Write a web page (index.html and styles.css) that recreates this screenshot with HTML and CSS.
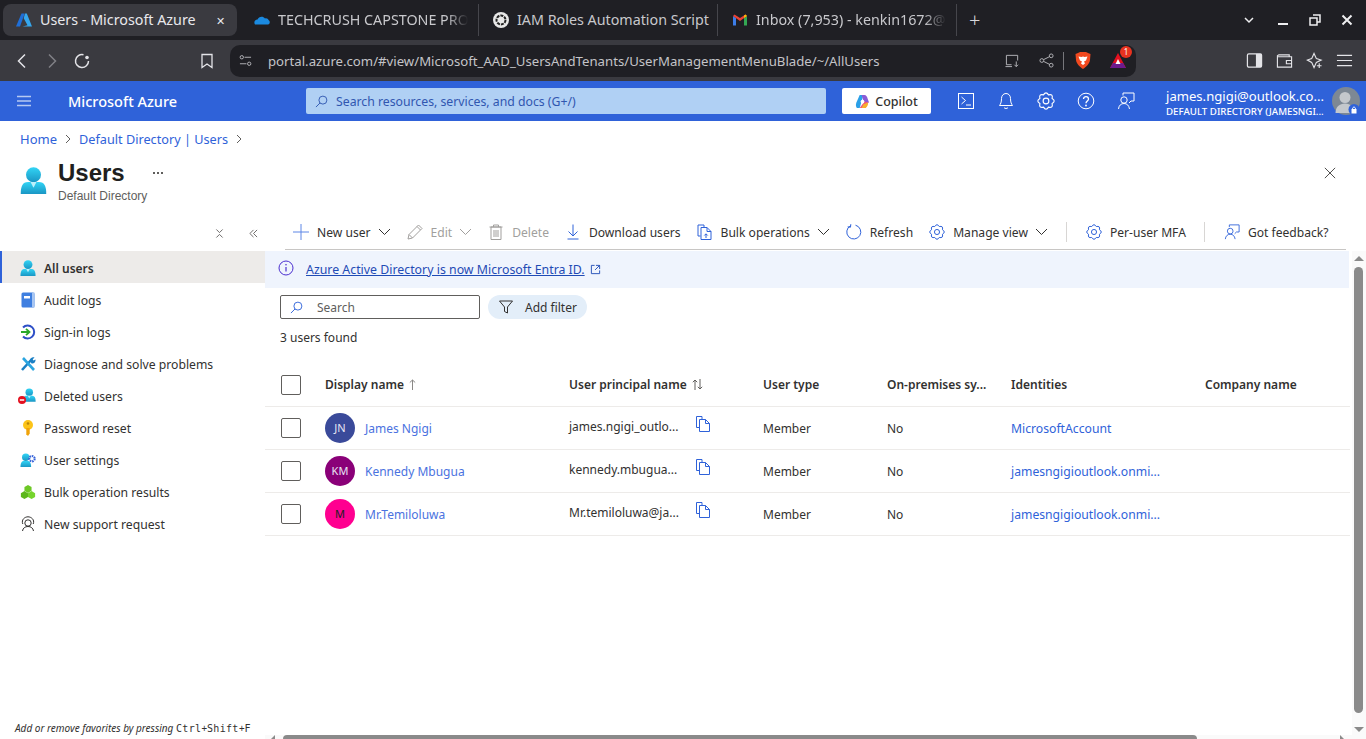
FILE: index.html
```html
<!DOCTYPE html>
<html lang="en">
<head>
  <meta charset="UTF-8" />
  <title>Users - Microsoft Azure</title>
  <link rel="stylesheet" href="styles.css">
</head>
<body>

  <!-- Shared icons -->
  <svg class="sprite">
    <defs>
      <linearGradient id="userGrad" x1="0" y1="0" x2="0" y2="1">
        <stop offset="0" stop-color="#32d4f5"/>
        <stop offset="1" stop-color="#1a96c4"/>
      </linearGradient>
      <symbol id="i-user" viewBox="0 0 18 18">
        <circle cx="9" cy="5.2" r="5" fill="url(#userGrad)"/>
        <path d="M0.5 18c0-5 1-8 5-8h7c4 0 5 3 5 8z" fill="url(#userGrad)"/>
        <path d="M7 10h4l-2 3.8z" fill="#bdf0fb"/>
      </symbol>
      <symbol id="i-gear" viewBox="0.8 0.8 14.4 14.4">
        <path d="M12.9 10.03Q13.8 13.8 10.03 12.9Q8 16.2 5.97 12.9Q2.2 13.8 3.1 10.03Q-.2 8 3.1 5.97Q2.2 2.2 5.97 3.1Q8 -.2 10.03 3.1Q13.8 2.2 12.9 5.97Q16.2 8 12.9 10.03Z" fill="none" stroke="currentColor" stroke-width=".9"/>
        <circle cx="8" cy="8" r="2.3" fill="none" stroke="currentColor" stroke-width=".9"/>
      </symbol>
      <symbol id="i-chev" viewBox="0 0 13 8">
        <path d="M1 1l5.500 5.500L12 1" fill="none" stroke="currentColor"/>
      </symbol>
      <symbol id="i-feedback" viewBox="0 0 18 18">
        <circle cx="7" cy="8" r="3.2" fill="none" stroke="currentColor"/>
        <path d="M1.500 17c.3-3.500 2.500-5.500 5.500-5.500s5 2 5.500 5.500M6 3.500V1h11v8h-3l-2 2" fill="none" stroke="currentColor"/>
      </symbol>
      <symbol id="i-copy" viewBox="0 0 14 16">
        <path d="M.5 .5h5.500v3M.5 .5v11h3M3.500 3.500h6l4 4v8h-10zM9.500 3.500v4h4" fill="none" stroke="currentColor"/>
      </symbol>
    </defs>
  </svg>

  <!-- Browser tabs -->
  <div class="tabbar">
    <div class="tab active">
      <svg class="favicon" viewBox="0 0 16 16"><path d="M5.500 1.500h3.200L4 14.500H0z" fill="#1f6fd8"/><path d="M9 1.500h1.800L16 14.500H6.500l5-1.300-3.800-7z" fill="#35a7ee"/></svg>
      <span class="tab-title">Users - Microsoft Azure</span>
      <span class="tab-close">✕</span>
    </div>
    <div class="tab">
      <svg class="favicon" viewBox="0 0 16 16"><path d="M1 12.500c-1.500-2-.3-5 2.500-5 1-3 5.500-4 7.500-1 2-.5 3 .5 3.500 1.500 2 1 1.500 4.500-.5 4.500z" fill="#1b8ae0"/></svg>
      <span class="tab-title fade">TECHCRUSH CAPSTONE PRO</span>
    </div>
    <div class="tab">
      <svg class="favicon" viewBox="0 0 16 16"><circle cx="8" cy="8" r="8" fill="#e8e8e8"/><circle cx="8" cy="8" r="4.500" fill="none" stroke="#222" stroke-width="2" stroke-dasharray="3 1"/></svg>
      <span class="tab-title">IAM Roles Automation Script</span>
    </div>
    <div class="tab">
      <svg class="favicon" viewBox="0 0 16 16"><path d="M1 13.500V4l3 2v7.500z" fill="#3d7de8"/><path d="M12 13.500V6l3-2v9.500z" fill="#34a853"/><path d="M1 4l7 5 7-5-1.500-1.500L8 6 2.500 2.500z" fill="#ea4335"/><path d="M12 6l3-2-1.500-1.500L12 3.500z" fill="#fbbc04"/></svg>
      <span class="tab-title fade">Inbox (7,953) - kenkin1672@</span>
    </div>
    <span class="new-tab">+</span>
    <div class="window-ctrls">
      <svg class="win-ic" viewBox="0 0 12 12"><path d="M2 4l4 4 4-4" fill="none" stroke="currentColor" stroke-width="1.500"/></svg>
      <svg class="win-ic" viewBox="0 0 12 12"><path d="M1 10h10" fill="none" stroke="currentColor" stroke-width="2"/></svg>
      <svg class="win-ic" viewBox="0 0 12 12"><path d="M4 1h7v7H8M1 4h7v7H1z" fill="none" stroke="currentColor" stroke-width="1.500"/></svg>
      <svg class="win-ic" viewBox="0 0 12 12"><path d="M1.500 1.500l9 9M10.500 1.500l-9 9" fill="none" stroke="currentColor" stroke-width="2"/></svg>
    </div>
  </div>

  <!-- Browser toolbar -->
  <div class="toolbar">
    <div class="nav-btns">
      <svg class="nav-ic" viewBox="0 0 16 16"><path d="M11 1.500L4.500 8l6.500 6.500" fill="none" stroke="currentColor" stroke-width="1.500"/></svg>
      <svg class="nav-ic dim" viewBox="0 0 16 16"><path d="M5 1.500L11.500 8 5 14.500" fill="none" stroke="currentColor" stroke-width="1.500"/></svg>
      <svg class="nav-ic" viewBox="0 0 16 16"><path d="M14.500 8A6.500 6.500 0 1 1 9.500 1.700" fill="none" stroke="currentColor" stroke-width="1.500"/><circle cx="13" cy="4.500" r="1.800" fill="currentColor"/></svg>
    </div>
    <svg class="nav-ic bookmark" viewBox="0 0 16 16"><path d="M3 1.500h10v13l-5-3.500-5 3.500z" fill="none" stroke="currentColor" stroke-width="1.300"/></svg>
    <div class="address">
      <svg class="addr-ic tune" viewBox="0 0 14 14"><circle cx="3" cy="3.500" r="1.800" fill="none" stroke="currentColor"/><path d="M6 3.500h7M1 10.500h7" stroke="currentColor"/><circle cx="11" cy="10.500" r="1.800" fill="none" stroke="currentColor"/></svg>
      <span class="url">portal.azure.com/#view/Microsoft_AAD_UsersAndTenants/UserManagementMenuBlade/~/AllUsers</span>
      <svg class="addr-ic" viewBox="0 0 16 16"><path d="M7 12.500H1.500v-10h12V8M.5 14.500h7M12 9v5.500M10 12.500l2 2 2-2" fill="none" stroke="currentColor"/></svg>
      <svg class="addr-ic" viewBox="0 0 16 16"><circle cx="3" cy="8" r="2" fill="none" stroke="currentColor"/><circle cx="13" cy="3" r="2" fill="none" stroke="currentColor"/><circle cx="13" cy="13" r="2" fill="none" stroke="currentColor"/><path d="M5 7l6-3M5 9l6 3" stroke="currentColor"/></svg>
      <span class="addr-sep"></span>
      <svg class="brave" viewBox="0 0 16 18"><path d="M3 1.500L5 .5h6l2 1 2.500 1-.5 6c-.5 4-4 7-7 9-3-2-6.500-5-7-9L.5 2.500z" fill="#f1491f"/><path d="M3.500 5l3 .5L8 5l1.500.5 3-.5-1.500 4-2 1 1 2-2 1.500-2-1.500 1-2-2-1z" fill="#fff"/></svg>
      <span class="rewards">
        <svg viewBox="0 0 18 18"><path d="M9 1l8 15H1z" fill="#e3101f"/><path d="M1 16h16l-3-5H4z" fill="#6d1a8c"/><path d="M9 7l2.500 5h-5z" fill="#fff"/></svg>
        <span class="rewards-badge">1</span>
      </span>
    </div>
    <div class="tool-right">
      <svg class="nav-ic" viewBox="0 0 18 18"><rect x="1.500" y="2" width="15" height="14" rx="1.500" fill="none" stroke="currentColor" stroke-width="1.300"/><rect x="10.500" y="2" width="6" height="14" fill="currentColor"/></svg>
      <svg class="nav-ic" viewBox="0 0 18 18"><path d="M3 3h11v2M1.500 5h15v11h-15zM1.500 5V4l1.500-1M11 9h5.500v3.500H11z" fill="none" stroke="currentColor" stroke-width="1.200"/></svg>
      <svg class="nav-ic" viewBox="0 0 18 18"><path d="M8.500 1.500L11 7l5 1.500-5 2.500-2.500 5.500L6 11 1.500 8.500 6 7z" fill="none" stroke="currentColor" stroke-width="1.200"/><path d="M14 12v5M11.500 14.500h5" stroke="currentColor" stroke-width="1.200"/></svg>
      <svg class="nav-ic" viewBox="0 0 18 18"><path d="M1 3.500h16M1 9h16M1 14.500h16" stroke="currentColor" stroke-width="1.300"/></svg>
    </div>
  </div>

  <!-- Azure header -->
  <header class="az-header">
    <svg class="az-burger" viewBox="0 0 14 12"><path d="M0 1.500h14M0 6h14M0 10.500h14" stroke="currentColor" stroke-width="1.300"/></svg>
    <span class="az-brand">Microsoft Azure</span>
    <div class="az-search">
      <svg class="az-search-ic" viewBox="0 0 14 14"><circle cx="8.500" cy="5.500" r="4.300" fill="none" stroke="currentColor"/><path d="M5.500 8.500L1 13" stroke="currentColor"/></svg>
      <span>Search resources, services, and docs (G+/)</span>
    </div>
    <button class="copilot">
      <svg viewBox="0 0 16 16"><path d="M5 1h4L7 8 5 15H3C1 15 .5 12 1.500 9z" fill="#2aa0e8"/><path d="M7 1h3c2 0 3 2 3.500 4L15 9l-5 1z" fill="#8a5bd6"/><path d="M5 15h5c2 0 3-3 4-6l-4-1z" fill="#f0567a"/><path d="M9 11l5-2c0 3-1.500 6-4 6H7z" fill="#f7b02c"/><circle cx="8" cy="8" r="2" fill="#fff"/></svg>
      Copilot
    </button>
    <div class="az-icons">
      <svg class="az-ic" viewBox="0 0 18 18"><rect x="1.500" y="1.500" width="15" height="15" fill="none" stroke="currentColor"/><path d="M4.500 5l4 3.500-4 3.500M9 13h5" fill="none" stroke="currentColor"/></svg>
      <svg class="az-ic" viewBox="0 0 18 18"><path d="M9 1.500c-3 0-4.500 2.500-4.500 5 0 4-1 5.500-2 7h13c-1-1.500-2-3-2-7 0-2.500-1.500-5-4.500-5zM7 15.500c.5 1.300 3.500 1.300 4 0" fill="none" stroke="currentColor"/></svg>
      <svg class="az-ic"><use href="#i-gear"/></svg>
      <svg class="az-ic" viewBox="0 0 18 18"><circle cx="9" cy="9" r="7.800" fill="none" stroke="currentColor"/><path d="M6.500 7c0-3.300 5-3.300 5 0 0 2-2.500 2-2.500 4.300" fill="none" stroke="currentColor" stroke-width="1.300"/><circle cx="9" cy="13.500" r=".9" fill="currentColor"/></svg>
      <svg class="az-ic"><use href="#i-feedback"/></svg>
    </div>
    <div class="az-user">
      <div class="az-user-mail">james.ngigi@outlook.co...</div>
      <div class="az-user-dir">DEFAULT DIRECTORY (JAMESNGI...</div>
    </div>
    <div class="az-avatar">
      <svg viewBox="0 0 28 28"><circle cx="14" cy="14" r="14" fill="#7d8894"/><circle cx="13" cy="10.500" r="5.500" fill="#c4c8cc"/><path d="M3.500 26c0-6 4-9.500 9.500-9.500s9.500 3.500 9.500 9.500z" fill="#c4c8cc"/><circle cx="22" cy="22.500" r="5.500" fill="#2f62d9"/><path d="M19.500 22h5v4.500h-5z" fill="#fff"/><path d="M20.500 22c0-2.500 3-2.500 3 0" fill="none" stroke="#fff"/></svg>
    </div>
  </header>

  <!-- Page heading -->
  <nav class="crumbs">
    <a href="#">Home</a>
    <svg class="crumb-sep" viewBox="0 0 6 10"><path d="M1 1l4 4-4 4" fill="none" stroke="currentColor"/></svg>
    <a class="crumb-dir" href="#">Default Directory | Users</a>
    <svg class="crumb-sep" viewBox="0 0 6 10"><path d="M1 1l4 4-4 4" fill="none" stroke="currentColor"/></svg>
  </nav>

  <div class="page-head">
    <svg class="page-icon"><use href="#i-user"/></svg>
    <div class="page-titles">
      <div class="page-title-row">
        <h1>Users</h1>
        <span class="more"></span>
      </div>
      <div class="page-sub">Default Directory</div>
    </div>
    <svg class="page-close" viewBox="0 0 14 14"><path d="M1 1l12 12M13 1L1 13" stroke="currentColor"/></svg>
  </div>

  <div class="blade">
    <!-- Left menu -->
    <aside class="side">
      <div class="side-tools">
        <svg class="side-tool" viewBox="0 0 10 10"><path d="M1.500 .5L5 4l3.500-3.500M1.500 9.500L5 6l3.500 3.500" fill="none" stroke="currentColor"/></svg>
        <svg class="side-tool" viewBox="0 0 10 10"><path d="M5 1L1 5l4 4M9 1L5 5l4 4" fill="none" stroke="currentColor"/></svg>
      </div>
      <a class="side-item active" href="#"><svg class="side-ic"><use href="#i-user"/></svg>All users</a>
      <a class="side-item" href="#">
        <svg class="side-ic" viewBox="0 0 16 16"><rect x="1.500" y="0.500" width="13" height="15" rx="1.500" fill="#3f7fe0"/><rect x="12" y="0.500" width="2.500" height="15" fill="#a8c6f2"/><rect x="4" y="4" width="6" height="2.500" fill="#fff"/></svg>
        Audit logs</a>
      <a class="side-item" href="#">
        <svg class="side-ic" viewBox="0 0 16 16"><path d="M3 3.500A6.500 6.500 0 1 1 3 12.500" fill="none" stroke="#2d4fc7" stroke-width="2"/><path d="M1 8h8M6 4.800L9.500 8 6 11.200" fill="none" stroke="#2aa82a" stroke-width="1.800"/></svg>
        Sign-in logs</a>
      <a class="side-item" href="#">
        <svg class="side-ic" viewBox="0 0 16 16"><path d="M2 14L12 3" stroke="#1a7fc4" stroke-width="2.600"/><path d="M3 2l11 12" stroke="#2aa5e0" stroke-width="2.600"/><path d="M10 4.500c0-2.500 2.500-4 4.500-3l-2 2 1 1 2-1c.5 2.500-2 4.500-4 4z" fill="#1a7fc4"/></svg>
        Diagnose and solve problems</a>
      <a class="side-item" href="#">
        <svg class="side-ic" viewBox="0 0 16 16"><use href="#i-user" x="2.500" width="13.500" height="14"/><circle cx="2" cy="12" r="4" fill="#e3101f"/><path d="M-.2 12h4.400" stroke="#fff" stroke-width="1.500"/></svg>
        Deleted users</a>
      <a class="side-item" href="#">
        <svg class="side-ic" viewBox="0 0 16 16"><circle cx="8" cy="5" r="5" fill="#fcc419"/><path d="M6.300 8h3.400v5.500L8 16l-1.700-1.700z" fill="#f0a30a"/><circle cx="8" cy="3.500" r="1.300" fill="#b8860b"/></svg>
        Password reset</a>
      <a class="side-item" href="#">
        <svg class="side-ic" viewBox="0 0 18 18"><circle cx="6.500" cy="6" r="4.200" fill="url(#userGrad)"/><path d="M0.500 17c0-5 1.500-7 4-7h4c2.500 0 4 2 4 7z" fill="url(#userGrad)"/><circle cx="13.500" cy="7.500" r="3" fill="none" stroke="#3461d9" stroke-width="2.400" stroke-dasharray="1.800 .9"/></svg>
        User settings</a>
      <a class="side-item" href="#">
        <svg class="side-ic" viewBox="0 0 18 18"><path d="M9 1l4 2.300v4.400L9 10 5 7.700V3.300z" fill="#6dc825"/><path d="M5 8l4 2.300v4.400L5 17l-4-2.300v-4.400z" fill="#5cb71c"/><path d="M13 8l4 2.300v4.400L13 17l-4-2.300v-4.400z" fill="#76d42c"/></svg>
        Bulk operation results</a>
      <a class="side-item" href="#">
        <svg class="side-ic" viewBox="0 0 16 16"><circle cx="8" cy="7" r="3.2" fill="none" stroke="currentColor"/><path d="M2.500 15c.5-3 2.500-4.500 5.500-4.500s5 1.500 5.500 4.500M2.800 8C1 3.500 5 .8 8 .8s7 2.700 5.200 7.200" fill="none" stroke="currentColor"/></svg>
        New support request</a>
      <p class="side-note">Add or remove favorites by pressing <kbd>Ctrl</kbd>+<kbd>Shift</kbd>+<kbd>F</kbd></p>
    </aside>

    <!-- Main content -->
    <main class="content">
      <div class="commands">
        <span class="cmd">
          <svg class="cmd-ic plus" viewBox="0 0 16 16"><path d="M8 0v16M0 8h16" stroke="currentColor"/></svg>
          New user<svg class="chev"><use href="#i-chev"/></svg>
        </span>
        <span class="cmd off">
          <svg class="cmd-ic" viewBox="0 0 16 16"><path d="M1 15l1-4.500L11.500 1 15 4.500 5.500 14zM2 10.500L5.500 14M10 2.500L13.500 6" fill="none" stroke="currentColor"/></svg>
          Edit<svg class="chev"><use href="#i-chev"/></svg>
        </span>
        <span class="cmd off">
          <svg class="cmd-ic" viewBox="0 0 16 16"><path d="M1.500 3h13M5.500 3V1h5v2M3 3h10v12.500H3zM6 6v7M8 6v7M10 6v7" fill="none" stroke="currentColor"/></svg>
          Delete
        </span>
        <span class="cmd">
          <svg class="cmd-ic blue" viewBox="0 0 16 16"><path d="M8 .5v11M3.500 7.500L8 12l4.500-4.500M2.500 15h11" fill="none" stroke="currentColor"/></svg>
          Download users
        </span>
        <span class="cmd">
          <svg class="cmd-ic blue" viewBox="0 0 16 16"><path d="M1 1h6v2M1 1v11h2.500M4 3.500h6l4 4v8H4zM10 3.500v4h4M9 14V10M7.300 11.500L9 9.800l1.700 1.700" fill="none" stroke="currentColor"/></svg>
          Bulk operations<svg class="chev"><use href="#i-chev"/></svg>
        </span>
        <span class="cmd">
          <svg class="cmd-ic blue" viewBox="0 0 16 16"><path d="M4.500 1.800A7 7 0 1 0 9.500 1.200M4.800 .2L4.500 3.200 1.700 2.800" fill="none" stroke="currentColor"/></svg>
          Refresh
        </span>
        <span class="cmd">
          <svg class="cmd-ic blue"><use href="#i-gear"/></svg>
          Manage view<svg class="chev"><use href="#i-chev"/></svg>
        </span>
        <span class="cmd-sep"></span>
        <span class="cmd">
          <svg class="cmd-ic blue"><use href="#i-gear"/></svg>
          Per-user MFA
        </span>
        <span class="cmd-sep"></span>
        <span class="cmd">
          <svg class="cmd-ic blue"><use href="#i-feedback"/></svg>
          Got feedback?
        </span>
      </div>

      <div class="banner">
        <svg class="banner-ic" viewBox="0 0 16 16"><circle cx="8" cy="8" r="7" fill="none" stroke="currentColor"/><path d="M8 7v4.500" stroke="currentColor" stroke-width="1.200"/><circle cx="8" cy="4.800" r=".8" fill="currentColor"/></svg>
        <a href="#">Azure Active Directory is now Microsoft Entra ID.</a>
        <svg class="banner-link" viewBox="0 0 12 12"><path d="M5 1.500H1.500v9h9V7M6.500 1.500h4v4M10.500 1.500L5.500 6.500" fill="none" stroke="currentColor"/></svg>
      </div>

      <div class="filters">
        <div class="search-box">
          <svg class="search-ic" viewBox="0 0 14 14"><circle cx="8.500" cy="5.500" r="4.300" fill="none" stroke="currentColor"/><path d="M5.500 8.500L1 13" stroke="currentColor"/></svg>
          Search
        </div>
        <div class="add-filter">
          <svg class="filter-ic" viewBox="0 0 14 14"><path d="M.5 1h13L8.500 7v6l-3-1.500V7z" fill="none" stroke="currentColor"/></svg>
          Add filter
        </div>
      </div>

      <div class="found">3 users found</div>

      <table class="users">
        <colgroup>
          <col class="c-check"><col class="c-name"><col class="c-upn"><col class="c-type"><col class="c-prem"><col class="c-id"><col>
        </colgroup>
        <thead>
          <tr>
            <th><span class="check"></span></th>
            <th>Display name<svg class="sort" viewBox="0 0 7 11"><path d="M3.500 11V1M.8 3.500L3.500 1l2.700 2.500" fill="none" stroke="currentColor"/></svg></th>
            <th>User principal name<svg class="sort both" viewBox="0 0 11 11"><path d="M3 11V1M.8 3.200L3 1l2.200 2.200M8 0v10M5.800 7.800L8 10l2.200-2.200" fill="none" stroke="currentColor"/></svg></th>
            <th>User type</th>
            <th>On-premises sy...</th>
            <th>Identities</th>
            <th>Company name</th>
          </tr>
        </thead>
        <tbody>
          <tr>
            <td><span class="check"></span></td>
            <td><div class="person"><span class="avatar jn">JN</span><a href="#">James Ngigi</a></div></td>
            <td><div class="upn"><span>james.ngigi_outlo...</span><svg class="copy"><use href="#i-copy"/></svg></div></td>
            <td>Member</td>
            <td>No</td>
            <td><a href="#">MicrosoftAccount</a></td>
            <td></td>
          </tr>
          <tr>
            <td><span class="check"></span></td>
            <td><div class="person"><span class="avatar km">KM</span><a href="#">Kennedy Mbugua</a></div></td>
            <td><div class="upn"><span>kennedy.mbugua...</span><svg class="copy"><use href="#i-copy"/></svg></div></td>
            <td>Member</td>
            <td>No</td>
            <td><a href="#">jamesngigioutlook.onmi...</a></td>
            <td></td>
          </tr>
          <tr>
            <td><span class="check"></span></td>
            <td><div class="person"><span class="avatar mr">M</span><a href="#">Mr.Temiloluwa</a></div></td>
            <td><div class="upn"><span>Mr.temiloluwa@ja...</span><svg class="copy"><use href="#i-copy"/></svg></div></td>
            <td>Member</td>
            <td>No</td>
            <td><a href="#">jamesngigioutlook.onmi...</a></td>
            <td></td>
          </tr>
        </tbody>
      </table>
    </main>

    <!-- Blade scrollbars -->
    <div class="vscroll">
      <span class="arrow up"></span>
      <span class="vthumb"></span>
      <span class="arrow down"></span>
    </div>
    <div class="hscroll">
      <span class="arrow left"></span>
      <span class="hthumb"></span>
      <span class="arrow right"></span>
    </div>
  </div>

</body>
</html>
```

FILE: styles.css
```css
html, body {
  margin: 0;
  padding: 0;
  height: 100%;
  overflow: hidden;
  font-family: "Noto Sans", sans-serif;
  font-size: 12px;
  color: #323130;
  background: #fff;
}

body {
  display: flex;
  flex-direction: column;
}

a {
  color: inherit;
  text-decoration: none;
}

svg {
  flex: none;
}

.sprite {
  position: absolute;
  width: 0;
  height: 0;
}

/* Browser tabs */
.tabbar {
  height: 40px;
  flex: none;
  display: flex;
  align-items: center;
  padding-left: 3px;
  background: #1f1f24;
  color: #c8c8cc;
  font-size: 14.3px;
}

.tab {
  width: 239px;
  height: 32px;
  box-sizing: border-box;
  display: flex;
  align-items: center;
  gap: 8px;
  padding-left: 14px;
  padding-right: 4px;
  border-right: 1px solid #46464c;
}

.tab.active {
  width: 234px;
  padding-left: 13px;
  padding-right: 12px;
  background: #3a3a40;
  border-radius: 8px;
  border-right: none;
  color: #e8e8ec;
  margin-right: 1px;
}

.tab:nth-child(2) {
  width: 241px;
  padding-left: 16px;
}

.favicon {
  width: 16px;
  height: 16px;
}

.tab-title {
  flex: 1;
  margin-top: -2px;
  white-space: nowrap;
  overflow: hidden;
}

.tab-title.fade {
  -webkit-mask-image: linear-gradient(90deg, #000 86%, transparent 97%);
}

.tab-close {
  font-size: 11px;
  color: #e8e8ec;
}

.new-tab {
  margin-left: 12px;
  margin-top: -2px;
  font-size: 20px;
  font-weight: 300;
  color: #d8d8dc;
}

.window-ctrls {
  margin-left: auto;
  display: flex;
  gap: 20px;
  padding-right: 13px;
  color: #eeeef0;
}

.win-ic {
  width: 12px;
  height: 12px;
}

.win-ic:first-child {
  margin-right: 2px;
}

/* Browser toolbar */
.toolbar {
  height: 41px;
  flex: none;
  display: flex;
  align-items: center;
  background: #3a3a40;
  color: #e4e4e8;
}

.nav-btns {
  display: flex;
  gap: 14px;
  padding-left: 14px;
}

.nav-ic {
  width: 16px;
  height: 16px;
}

.nav-ic.dim {
  color: #808086;
}

.bookmark {
  margin-left: 109px;
}

.address {
  width: 906px;
  height: 32px;
  box-sizing: border-box;
  margin-left: 15px;
  display: flex;
  align-items: center;
  padding: 0 9px;
  background: #1f1f24;
  border-radius: 10px;
  color: #b8b8bc;
}

.addr-ic {
  width: 15px;
  height: 15px;
}

.addr-ic.tune {
  width: 13px;
  height: 13px;
}

.url {
  flex: 1;
  margin-left: 16px;
  font-size: 13.2px;
  color: #c4c4c8;
  white-space: nowrap;
}

.address .addr-ic + .addr-ic {
  margin-left: 19px;
}

.addr-sep {
  width: 1px;
  height: 18px;
  margin-left: 9px;
  background: #77777c;
}

.brave {
  width: 16px;
  height: 19px;
  margin-left: 11px;
}

.rewards {
  position: relative;
  width: 18px;
  height: 18px;
  margin-left: 18px;
}

.rewards svg {
  width: 18px;
  height: 18px;
}

.rewards-badge {
  position: absolute;
  top: -6px;
  right: -5px;
  width: 12px;
  height: 12px;
  border-radius: 50%;
  background: #e8321f;
  color: #fff;
  font-size: 8px;
  line-height: 12px;
  text-align: center;
}

.tool-right {
  display: flex;
  gap: 13px;
  margin-left: 110px;
}

.tool-right .nav-ic {
  width: 17px;
  height: 17px;
}

/* Azure header */
.az-header {
  height: 40px;
  flex: none;
  display: flex;
  align-items: center;
  background: #2f62d9;
  color: #fff;
}

.az-burger {
  width: 14px;
  height: 12px;
  margin-left: 17px;
  color: #b6c9f2;
}

.az-brand {
  margin-left: 37px;
  width: 238px;
  font-size: 14.5px;
  font-weight: 500;
}

.az-search {
  width: 520px;
  height: 26px;
  box-sizing: border-box;
  display: flex;
  align-items: center;
  gap: 8px;
  padding-left: 9px;
  background: #b0d0f4;
  border-radius: 2px;
  color: #3056b0;
  font-size: 12.25px;
}

.az-search-ic {
  width: 13px;
  height: 13px;
}

.copilot {
  width: 89px;
  height: 26px;
  margin-left: 16px;
  display: flex;
  align-items: center;
  justify-content: center;
  gap: 5px;
  background: #fff;
  border: none;
  border-radius: 2px;
  color: #323130;
  font: 500 12.5px "Noto Sans", sans-serif;
}

.copilot svg {
  width: 15px;
  height: 15px;
}

.az-icons {
  display: flex;
  gap: 22px;
  margin-left: 26px;
}

.az-ic {
  width: 18px;
  height: 18px;
}

.az-user {
  margin-left: 31px;
  margin-top: 4px;
  width: 166px;
  white-space: nowrap;
  line-height: 1;
}

.az-user-mail {
  font-size: 13.1px;
}

.az-user-dir {
  margin-top: 4px;
  font-size: 9.7px;
  font-weight: 500;
}

.az-avatar svg {
  width: 28px;
  height: 28px;
  display: block;
}

/* Page heading */
.crumbs {
  flex: none;
  height: 20px;
  margin-top: 8px;
  padding-left: 20px;
  display: flex;
  align-items: center;
  gap: 8px;
  font-size: 13px;
  color: #2f62d9;
}

.crumb-dir {
  font-size: 12.7px;
}

.crumb-sep {
  width: 6px;
  height: 10px;
  color: #605e5c;
}

.page-head {
  flex: none;
  height: 66px;
  display: flex;
  align-items: flex-start;
  padding-left: 20px;
}

.page-icon {
  width: 27px;
  height: 29px;
  margin-top: 17px;
}

.page-titles {
  margin-left: 11px;
}

.page-title-row {
  display: flex;
  align-items: center;
  gap: 27px;
}

h1 {
  margin: 8px 0 0;
  font: bold 24px "Liberation Sans", sans-serif;
  line-height: 32px;
  color: #201f1e;
}

/* three dots, drawn so they sit apart like the portal's */
.more {
  width: 12px;
  height: 2px;
  margin-top: 8px;
  background: radial-gradient(circle, #605e5c 0.8px, transparent 1px) 0 0 / 4px 2px;
}

.page-sub {
  font: 12px "Liberation Sans", sans-serif;
  color: #605e5c;
}

.page-close {
  width: 12px;
  height: 12px;
  margin: 18px 30px 0 auto;
  color: #323130;
}

/* Blade */
.blade {
  position: relative;
  flex: 1;
  min-height: 0;
  display: grid;
  grid-template-columns: 265px 1085px;
}

.side {
  display: flex;
  flex-direction: column;
}

.side-tools {
  height: 36px;
  flex: none;
  display: flex;
  align-items: center;
  justify-content: flex-end;
  gap: 25px;
  padding-right: 7px;
  color: #605e5c;
}

.side-tool {
  width: 9px;
  height: 9px;
}

.side-item {
  height: 32px;
  flex: none;
  box-sizing: border-box;
  display: flex;
  align-items: center;
  gap: 8px;
  padding-left: 20px;
  padding-top: 2px;
  font-size: 12.2px;
  color: #323130;
}

.side-item.active {
  background: #edebe9;
  border-left: 2px solid #2f62d9;
  padding-left: 18px;
  font-size: 12px;
  font-weight: 600;
}

.side-ic {
  width: 16px;
  height: 16px;
  overflow: visible;
}

.side-note {
  margin: auto 0 4px 15px;
  font-size: 10px;
  font-style: italic;
  white-space: nowrap;
}

kbd {
  font: normal 10px "DejaVu Sans Mono", monospace;
  letter-spacing: .3px;
}

.content {
  min-width: 0;
}

/* Command bar */
.commands {
  height: 34px;
  margin: 0 4px 0 20px;
  display: flex;
  align-items: center;
  padding-left: 8px;
  border-bottom: 1px solid #c8c6c4;
  font-size: 12.1px;
  white-space: nowrap;
}

.cmd {
  display: flex;
  flex: none;
  align-items: center;
  gap: 8px;
  margin-right: 16px;
}

.cmd:last-child {
  margin-right: 0;
}

.cmd.off {
  color: #a19f9d;
}

.cmd-ic {
  width: 16px;
  height: 16px;
}

.cmd-ic.blue {
  color: #2f62d9;
}

.cmd-ic.plus {
  color: #5c86e6;
}

.chev {
  width: 13px;
  height: 8px;
  margin-left: -1px;
}

.cmd-sep {
  flex: none;
  width: 1px;
  height: 20px;
  margin: 0 19px 0 2px;
  background: #d8d6d4;
}

.banner {
  height: 37px;
  margin: 1px 1px 0 0;
  display: flex;
  align-items: center;
  padding-left: 13px;
  background: #eff4fd;
  font-size: 12.35px;
  color: #1f4bb5;
}

.banner-ic {
  width: 16px;
  height: 16px;
  margin-top: -4px;
  color: #4b2fd0;
}

.banner a {
  margin-left: 12px;
  text-decoration: underline;
}

.banner-link {
  width: 11px;
  height: 11px;
  margin-left: 5px;
}

.filters {
  margin-top: 7px;
  padding-left: 15px;
  display: flex;
  align-items: center;
  gap: 8px;
}

.search-box {
  width: 200px;
  height: 24px;
  box-sizing: border-box;
  display: flex;
  align-items: center;
  gap: 14px;
  padding-left: 9px;
  border: 1px solid #605e5c;
  border-radius: 2px;
  color: #605e5c;
}

.search-ic {
  width: 13px;
  height: 13px;
  color: #2f62d9;
}

.add-filter {
  width: 99px;
  height: 24px;
  box-sizing: border-box;
  display: flex;
  align-items: center;
  gap: 12px;
  padding-left: 11px;
  background: #e3eef9;
  border-radius: 12px;
}

.filter-ic {
  width: 14px;
  height: 14px;
}

.found {
  margin-top: 10px;
  padding-left: 15px;
  line-height: 17px;
}

/* Users table */
.users {
  width: 100%;
  margin-top: 17px;
  border-collapse: collapse;
  table-layout: fixed;
}

.c-check { width: 60px; }
.c-name { width: 244px; }
.c-upn { width: 194px; }
.c-type { width: 124px; }
.c-prem { width: 124px; }
.c-id { width: 194px; }

.users th,
.users td {
  height: 42px;
  padding: 0;
  border-bottom: 1px solid #edebe9;
  text-align: left;
  white-space: nowrap;
}

.users th {
  height: 43px;
  font-weight: 600;
}

.users th:first-child,
.users td:first-child {
  padding-left: 16px;
}

.users td a {
  font-size: 12.2px;
  color: #2f62d9;
}

.check {
  display: block;
  width: 18px;
  height: 18px;
  border: 1px solid #605e5c;
  border-radius: 2px;
}

.sort {
  width: 7px;
  height: 11px;
  margin-left: 5px;
  vertical-align: -1px;
  color: #8a8886;
}

.sort.both {
  width: 11px;
  color: #605e5c;
}

.person {
  display: flex;
  align-items: center;
  gap: 10px;
}

.users .person a {
  font-size: 12px;
  color: #4a72e0;
}

.avatar {
  width: 30px;
  height: 30px;
  flex: none;
  border-radius: 50%;
  font-size: 11px;
  line-height: 30px;
  text-align: center;
  color: #e8e6f4;
}

.avatar.jn { background: #3a4a9a; }
.avatar.km { background: #8a0078; }
.avatar.mr { background: #ff0090; color: #201f1e; }

.upn {
  display: flex;
  align-items: flex-start;
  margin-top: -3px;
}

.upn span {
  width: 127px;
}

.copy {
  width: 14px;
  height: 16px;
  margin-top: -2px;
  color: #2f62d9;
}

/* Blade scrollbars */
.vscroll {
  position: absolute;
  top: 36px;
  right: 0;
  bottom: 0;
  width: 14px;
  background: #fafafa;
}

.vthumb {
  position: absolute;
  top: 16px;
  bottom: 26px;
  left: 2px;
  width: 9px;
  border-radius: 5px;
  background: #8a8a8a;
}

.arrow {
  position: absolute;
  width: 0;
  height: 0;
}

.arrow.up,
.arrow.down {
  left: 2px;
  border-left: 5px solid transparent;
  border-right: 5px solid transparent;
}

.arrow.up {
  top: 5px;
  border-bottom: 5px solid #8a8a8a;
}

.arrow.down {
  bottom: 7px;
  border-top: 5px solid #8a8a8a;
}

.hscroll {
  position: absolute;
  left: 265px;
  right: 14px;
  bottom: 0;
  height: 4px;
  background: #fafafa;
}

.hthumb {
  position: absolute;
  left: 18px;
  bottom: 0;
  width: 914px;
  height: 4px;
  border-radius: 4px 4px 0 0;
  background: #8a8a8a;
}

.arrow.left,
.arrow.right {
  bottom: 0;
  border-top: 4px solid transparent;
}

.arrow.left {
  left: 6px;
  border-right: 4px solid #8a8a8a;
}

.arrow.right {
  left: 1075px;
  border-left: 4px solid #8a8a8a;
}
```
